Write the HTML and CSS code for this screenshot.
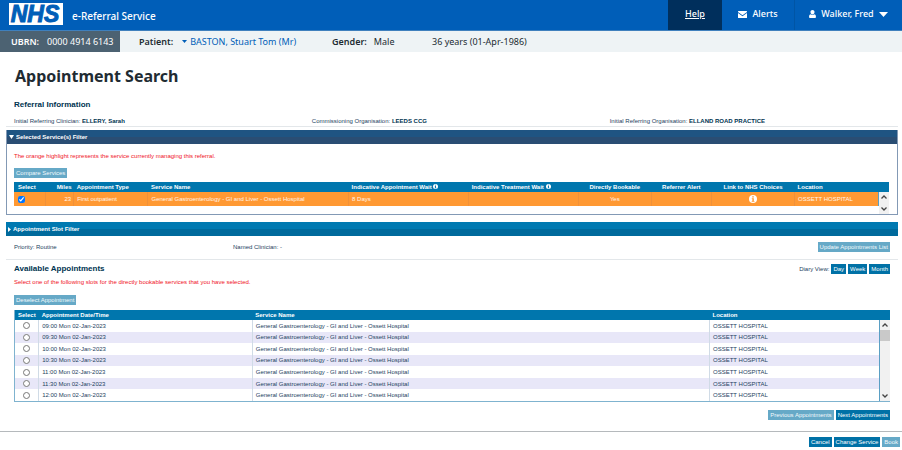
FILE: index.html
```html
<!DOCTYPE html>
<html lang="en">
<head>
    <meta charset="UTF-8">
    <meta name="viewport" content="width=device-width, initial-scale=1.0">
    <title>Appointment Search - e-Referral Service</title>
    <link rel="stylesheet" href="styles.css">
</head>
<body>

    <header class="top-bar">
        <svg class="logo" viewBox="0 0 54 22" role="img" aria-label="NHS">
            <rect width="54" height="22" fill="#fff"/>
            <text x="26" y="19" text-anchor="middle" class="logo-text">NHS</text>
        </svg>
        <span class="service">e-Referral Service</span>
        <nav class="top-nav">
            <a href="#" class="nav-item help">Help</a>
            <a href="#" class="nav-item alerts">
                <svg width="9" height="7" viewBox="0 0 9 7"><path d="M0 .5Q0 0 .5 0h8Q9 0 9 .5V1L4.500 4.200 0 1zM0 2l4.500 3.200L9 2v4.500Q9 7 8.500 7h-8Q0 7 0 6.500z" fill="#fff"/></svg>
                Alerts
            </a>
            <button class="nav-item user">
                <svg width="7" height="8" viewBox="0 0 7 8"><path d="M3.500 0C5 0 5.600 1 5.500 2.200 5.400 3.500 4.600 4.400 3.500 4.400S1.600 3.500 1.500 2.200C1.400 1 2 0 3.500 0zM1.500 4.200Q3.500 5.800 5.500 4.200 7 4.500 7 7 7 8 6 8H1Q0 8 0 7 0 4.500 1.500 4.200z" fill="#fff"/></svg>
                Walker, Fred
                <svg width="9" height="5" viewBox="0 0 9 5"><path d="M0 0h9L4.500 5z" fill="#fff"/></svg>
            </button>
        </nav>
    </header>

    <div class="patient-bar">
        <div class="ubrn"><b>UBRN:</b><span>0000 4914 6143</span></div>
        <div class="patient">
            <b>Patient:</b>
            <a href="#"><svg width="5" height="3" viewBox="0 0 5 3"><path d="M0 0h5L2.500 3z" fill="#005eb8"/></svg>BASTON, Stuart Tom (Mr)</a>
        </div>
        <div class="gender"><b>Gender:</b><span>Male</span></div>
        <div>36 years (01-Apr-1986)</div>
    </div>

    <main>
        <h1>Appointment Search</h1>

        <section class="referral">
            <h2>Referral Information</h2>
            <div class="referral-row">
                <div>Initial Referring Clinician: <b>ELLERY, Sarah</b></div>
                <div>Commissioning Organisation: <b>LEEDS CCG</b></div>
                <div>Initial Referring Organisation: <b>ELLAND ROAD PRACTICE</b></div>
            </div>
        </section>

        <section class="filter-panel">
            <h3 class="bar bar-open">
                <svg width="5" height="4" viewBox="0 0 5 4"><path d="M0 0h5L2.500 4z" fill="#fff"/></svg>
                Selected Service(s) Filter
            </h3>
            <div class="filter-body">
                <p class="warning">The orange highlight represents the service currently managing this referral.</p>
                <button class="btn" disabled>Compare Services</button>
                <div class="list">
                    <table class="services">
                        <colgroup>
                            <col class="s-select"><col class="s-miles"><col class="s-type"><col class="s-name"><col class="s-wait"><col class="s-treat"><col class="s-book"><col class="s-alert"><col class="s-link"><col>
                        </colgroup>
                        <thead>
                            <tr>
                                <th>Select</th>
                                <th class="right">Miles</th>
                                <th>Appointment Type</th>
                                <th>Service Name</th>
                                <th>Indicative Appointment Wait <svg class="info" width="5" height="5" viewBox="0 0 10 10"><circle cx="5" cy="5" r="5" fill="#fff"/><path d="M4 1.500h2v1.500H4zM3.500 4H6v3.500h.8v1H3.400v-1h.8V5h-.7z" fill="#0076ad"/></svg></th>
                                <th>Indicative Treatment Wait <svg class="info" width="5" height="5" viewBox="0 0 10 10"><circle cx="5" cy="5" r="5" fill="#fff"/><path d="M4 1.500h2v1.500H4zM3.500 4H6v3.500h.8v1H3.400v-1h.8V5h-.7z" fill="#0076ad"/></svg></th>
                                <th class="center">Directly Bookable</th>
                                <th class="center">Referrer Alert</th>
                                <th class="center">Link to NHS Choices</th>
                                <th>Location</th>
                            </tr>
                        </thead>
                        <tbody>
                            <tr>
                                <td><input type="checkbox" aria-label="Select General Gastroenterology" checked></td>
                                <td class="right">23</td>
                                <td>First outpatient</td>
                                <td>General Gastroenterology - GI and Liver - Ossett Hospital</td>
                                <td>8 Days</td>
                                <td></td>
                                <td class="center">Yes</td>
                                <td></td>
                                <td class="center"><a href="#" aria-label="NHS Choices"><svg class="info" width="8" height="8" viewBox="0 0 10 10"><circle cx="5" cy="5" r="5" fill="#fff"/><path d="M4 1.500h2v1.500H4zM3.500 4H6v3.500h.8v1H3.400v-1h.8V5h-.7z" fill="#ff9933"/></svg></a></td>
                                <td>OSSETT HOSPITAL</td>
                            </tr>
                        </tbody>
                    </table>
                    <div class="scroll">
                        <svg width="6" height="4" viewBox="0 0 6 4"><path d="M.5 3.500L3 1l2.500 2.500" fill="none" stroke="#444" stroke-width="1.300"/></svg>
                        <svg width="6" height="4" viewBox="0 0 6 4"><path d="M.5 .5L3 3 5.500 .5" fill="none" stroke="#444" stroke-width="1.300"/></svg>
                    </div>
                </div>
            </div>
        </section>

        <section class="slots">
            <h3 class="bar">
                <svg width="3" height="5" viewBox="0 0 3 5"><path d="M0 0v5l3-2.500z" fill="#fff"/></svg>
                Appointment Slot Filter
            </h3>
            <div class="slots-row">
                <div>Priority: Routine</div>
                <div>Named Clinician: -</div>
                <button class="btn" disabled>Update Appointments List</button>
            </div>
        </section>

        <section class="available">
            <div class="available-head">
                <h2>Available Appointments</h2>
                <div class="buttons">
                    <span>Diary View:</span>
                    <button class="btn">Day</button>
                    <button class="btn">Week</button>
                    <button class="btn">Month</button>
                </div>
            </div>
            <p class="warning">Select one of the following slots for the directly bookable services that you have selected.</p>
            <button class="btn" disabled>Deselect Appointment</button>
            <div class="list">
                <table class="appointments">
                    <colgroup>
                        <col class="a-select"><col class="a-date"><col class="a-name"><col>
                    </colgroup>
                    <thead>
                        <tr>
                            <th>Select</th>
                            <th>Appointment Date/Time</th>
                            <th>Service Name</th>
                            <th>Location</th>
                        </tr>
                    </thead>
                    <tbody>
                        <tr>
                            <td class="center"><input type="radio" name="slot" id="slot1"></td>
                            <td><label for="slot1">09:00 Mon 02-Jan-2023</label></td>
                            <td>General Gastroenterology - GI and Liver - Ossett Hospital</td>
                            <td>OSSETT HOSPITAL</td>
                        </tr>
                        <tr>
                            <td class="center"><input type="radio" name="slot" id="slot2"></td>
                            <td><label for="slot2">09:30 Mon 02-Jan-2023</label></td>
                            <td>General Gastroenterology - GI and Liver - Ossett Hospital</td>
                            <td>OSSETT HOSPITAL</td>
                        </tr>
                        <tr>
                            <td class="center"><input type="radio" name="slot" id="slot3"></td>
                            <td><label for="slot3">10:00 Mon 02-Jan-2023</label></td>
                            <td>General Gastroenterology - GI and Liver - Ossett Hospital</td>
                            <td>OSSETT HOSPITAL</td>
                        </tr>
                        <tr>
                            <td class="center"><input type="radio" name="slot" id="slot4"></td>
                            <td><label for="slot4">10:30 Mon 02-Jan-2023</label></td>
                            <td>General Gastroenterology - GI and Liver - Ossett Hospital</td>
                            <td>OSSETT HOSPITAL</td>
                        </tr>
                        <tr>
                            <td class="center"><input type="radio" name="slot" id="slot5"></td>
                            <td><label for="slot5">11:00 Mon 02-Jan-2023</label></td>
                            <td>General Gastroenterology - GI and Liver - Ossett Hospital</td>
                            <td>OSSETT HOSPITAL</td>
                        </tr>
                        <tr>
                            <td class="center"><input type="radio" name="slot" id="slot6"></td>
                            <td><label for="slot6">11:30 Mon 02-Jan-2023</label></td>
                            <td>General Gastroenterology - GI and Liver - Ossett Hospital</td>
                            <td>OSSETT HOSPITAL</td>
                        </tr>
                        <tr>
                            <td class="center"><input type="radio" name="slot" id="slot7"></td>
                            <td><label for="slot7">12:00 Mon 02-Jan-2023</label></td>
                            <td>General Gastroenterology - GI and Liver - Ossett Hospital</td>
                            <td>OSSETT HOSPITAL</td>
                        </tr>
                    </tbody>
                </table>
                <div class="scroll">
                    <svg width="6" height="4" viewBox="0 0 6 4"><path d="M.5 3.500L3 1l2.500 2.500" fill="none" stroke="#444" stroke-width="1.300"/></svg>
                    <div class="thumb"></div>
                    <svg width="6" height="4" viewBox="0 0 6 4"><path d="M.5 .5L3 3 5.500 .5" fill="none" stroke="#444" stroke-width="1.300"/></svg>
                </div>
            </div>
            <div class="buttons paging">
                <button class="btn" disabled>Previous Appointments</button>
                <button class="btn">Next Appointments</button>
            </div>
        </section>
    </main>

    <footer class="buttons">
        <button class="btn">Cancel</button>
        <button class="btn">Change Service</button>
        <button class="btn" disabled>Book</button>
    </footer>

</body>
</html>
```
FILE: styles.css
```css
* {
    box-sizing: border-box;
}

body {
    margin: 0;
    background-color: #fff;
    color: #1d4260;
    font-family: "Liberation Sans", Arial, sans-serif;
    font-size: 6px;
    line-height: 8px;
}

h1, h2, h3, p {
    margin: 0;
}

svg {
    flex-shrink: 0;
}

.top-bar {
    display: flex;
    align-items: center;
    height: 31px;
    padding-left: 9px;
    background-color: #005eb8;
    border-bottom: 1px solid #3f80bd;
    color: #fff;
    font-family: "Noto Sans", "Open Sans", sans-serif;
    font-size: 9px;
    font-weight: 500;
    line-height: 14px;
}

.logo {
    width: 54px;
    height: 22px;
    margin-bottom: 2px;
    overflow: visible;
}

.logo-text {
    font-family: "Liberation Sans", Arial, sans-serif;
    font-size: 23px;
    font-weight: bold;
    font-style: italic;
    fill: #005eb8;
    stroke: #005eb8;
    stroke-width: 1px;
}

.service {
    margin-left: 9px;
    padding-top: 2px;
    font-size: 10px;
}

.top-nav {
    display: flex;
    align-self: stretch;
    margin-left: auto;
}

.nav-item {
    display: flex;
    align-items: center;
    justify-content: center;
    gap: 5px;
    padding: 0 0 2px;
    border: none;
    background: none;
    color: #fff;
    font: inherit;
    text-decoration: none;
}

.help {
    width: 54px;
    background-color: #002f5c;
    text-decoration: underline;
}

.alerts {
    width: 73px;
    border-right: 1px solid #0055a5;
}

.user {
    width: 107px;
    cursor: pointer;
}

.patient-bar {
    display: flex;
    align-items: center;
    height: 21px;
    background-color: #eef3f5;
    color: #212b32;
    font-family: "Noto Sans", "Open Sans", sans-serif;
    font-size: 9px;
    line-height: 12px;
}

.patient-bar b {
    font-weight: 600;
}

.ubrn {
    display: flex;
    align-items: center;
    align-self: stretch;
    gap: 8px;
    width: 120px;
    padding-left: 11px;
    background-color: #4c6272;
    color: #fff;
}

.patient {
    display: flex;
    gap: 9px;
    width: 212px;
    padding-left: 19px;
}

.patient a {
    display: flex;
    align-items: center;
    gap: 3px;
    color: #005eb8;
    text-decoration: none;
}

.gender {
    display: flex;
    gap: 7px;
    width: 100px;
}

main {
    padding: 14px 4px 0 6px;
}

h1 {
    padding-left: 9px;
    color: #212b32;
    font-family: "Noto Sans", "Open Sans", sans-serif;
    font-size: 16px;
    font-weight: 700;
    line-height: 20px;
}

h2 {
    color: #003350;
    font-size: 8px;
    line-height: 10px;
}

.referral {
    padding: 14px 8px 0;
    border-bottom: 1px solid #e3e7ea;
}

.referral-row {
    display: grid;
    grid-template-columns: 34% 34% auto;
    padding: 7px 0 1px;
}

.referral-row b {
    color: #003350;
}

.bar {
    display: flex;
    align-items: center;
    gap: 2px;
    height: 14px;
    padding-left: 2px;
    background: linear-gradient(#0079b1 50%, #006a9c 50%);
    color: #fff;
    font-size: 6px;
}

.bar-open {
    background: linear-gradient(#1f5482 50%, #2a4d73 50%);
}

.filter-panel {
    margin-top: 3px;
    border: 1px solid #8399b5;
    border-top: none;
}

.filter-body {
    padding: 8px 8px 0 7px;
}

.warning {
    color: #f0141e;
}

.btn {
    display: block;
    height: 10px;
    padding: 0 2px;
    border: none;
    background-color: #0071a6;
    color: #fff;
    font-family: inherit;
    font-size: 6px;
    line-height: 10px;
    cursor: pointer;
}

.btn:disabled {
    background-color: #66a9c7;
    color: #f2f9fc;
    cursor: default;
}

.filter-body .btn {
    margin: 8px 0 4px;
}

.list {
    display: flex;
}

table {
    flex: 1;
    table-layout: fixed;
    border-collapse: collapse;
}

th, td {
    padding: 0 3px;
    text-align: left;
    white-space: nowrap;
}

th {
    height: 10px;
    background-color: #0076ad;
    color: #fff;
}

td + td {
    border-left: 1px solid #d0dbe6;
}

td:last-child {
    border-right: 1px solid #5a9fc4;
}

.right {
    padding-right: 2px;
    text-align: right;
}

.center {
    text-align: center;
}

.info {
    vertical-align: middle;
}

input {
    display: block;
    width: 7px;
    height: 7px;
    margin: 0;
}

input[type="radio"] {
    margin: 0 auto;
}

.services {
    align-self: flex-start;
}

.services td {
    height: 14px;
    background-color: #ff9933;
    border-left-color: #f0913a;
    color: #fff5ea;
}

.services th:first-child,
.services td:first-child {
    padding-left: 4px;
}

.services .info {
    margin-top: -1px;
}

.s-select { width: 3.7%; }
.s-miles { width: 3.2%; }
.s-type { width: 8.6%; }
.s-name { width: 23.2%; }
.s-wait { width: 13.9%; }
.s-treat { width: 12.7%; }
.s-book { width: 8.4%; }
.s-alert { width: 7%; }
.s-link { width: 9.6%; }

.a-select { width: 2.7%; }
.a-date { width: 24.7%; }
.a-name { width: 52.9%; }

.scroll {
    display: flex;
    flex-direction: column;
    align-items: center;
    justify-content: space-between;
    width: 10px;
    padding: 3px 0;
    border-top: 10px solid #0076ad;
    background-color: #f1f1f1;
}

.filter-body .scroll {
    height: 32px;
}

.thumb {
    align-self: stretch;
    height: 11px;
    margin: 3px 0 auto;
    background-color: #c9c9c9;
}

.slots {
    margin-top: 7px;
    border-bottom: 1px solid #e3e7ea;
}

.slots-row {
    display: grid;
    grid-template-columns: 25% 1fr auto;
    align-items: center;
    padding: 6px 8px 7px;
}

.available {
    padding: 4px 8px 0;
}

.available-head {
    display: flex;
    align-items: center;
    justify-content: space-between;
}

.buttons {
    display: flex;
    align-items: center;
    justify-content: flex-end;
    gap: 2px;
}

.available .warning {
    padding: 4px 0 9px;
}

.available .list {
    margin-top: 5px;
    border-left: 1px solid #7fb3cf;
    border-bottom: 1px solid #7fb3cf;
}

.appointments {
    height: 91px;
}

.appointments tbody tr:nth-child(even) {
    background-color: #e8e7f8;
}

.paging {
    margin-top: 8px;
}

footer {
    margin-top: 11px;
    padding: 5px 2px 3px;
    border-top: 1px solid #b5b9bc;
}
```
